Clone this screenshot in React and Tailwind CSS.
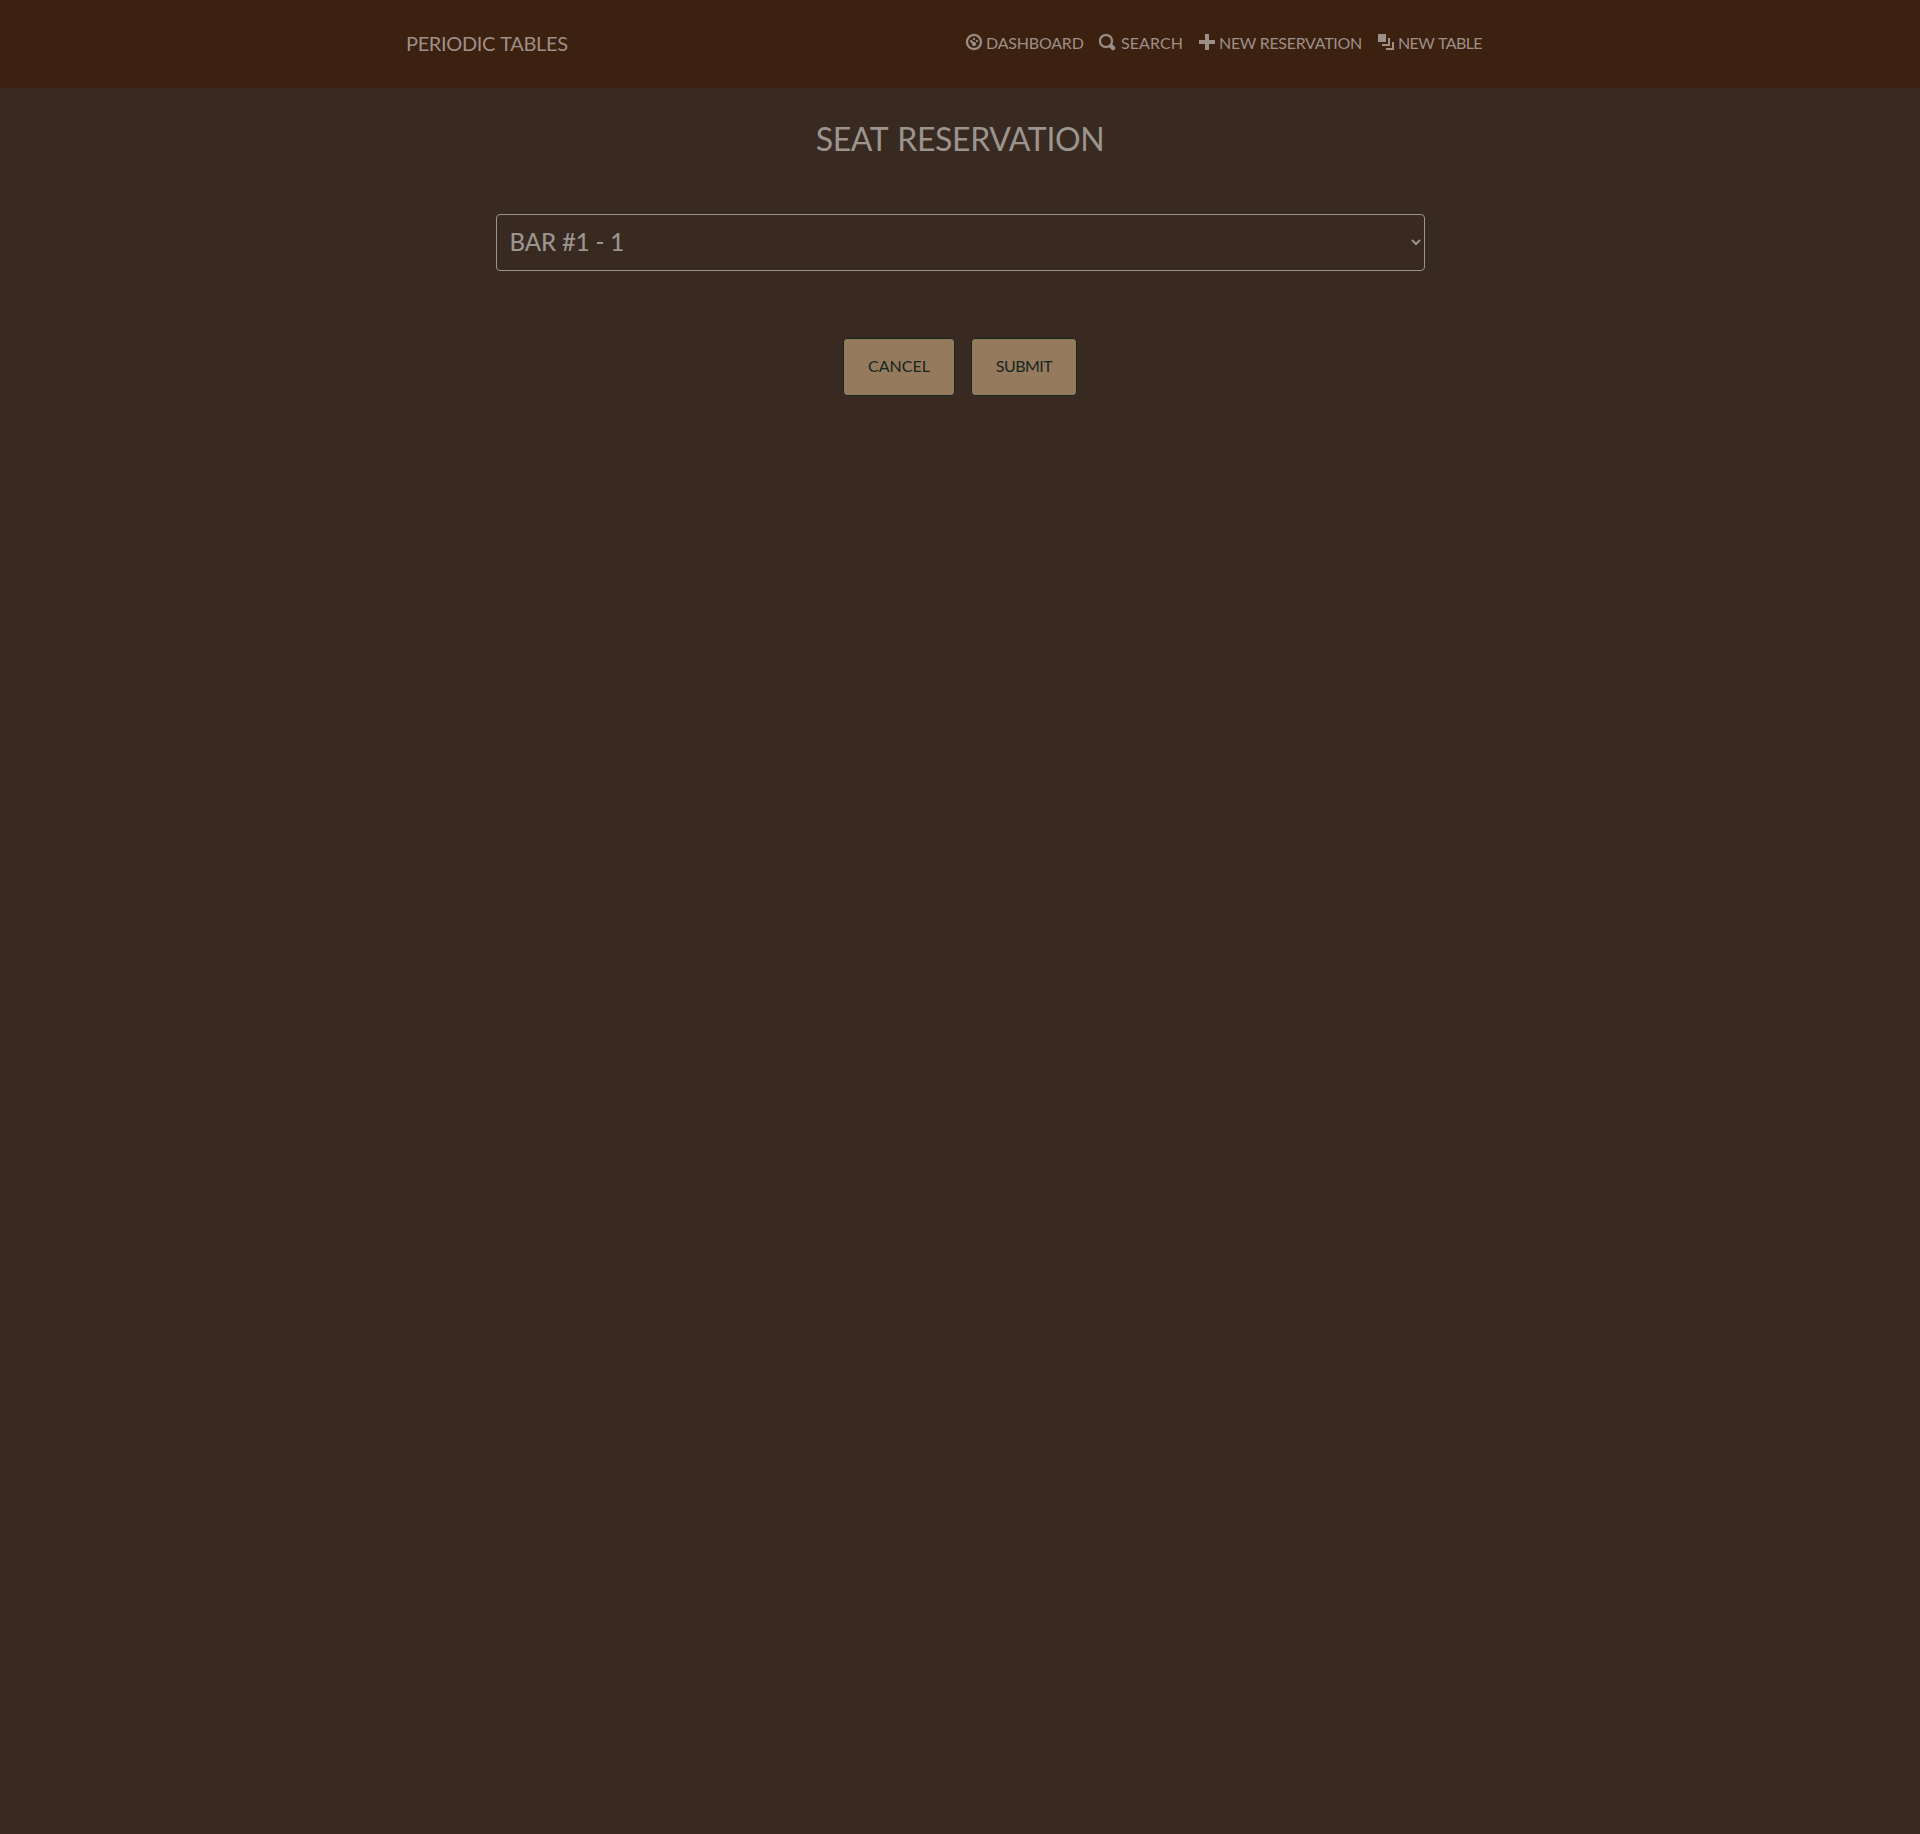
const icons = {
  dial: "M4 0c-2.2 0-4 1.8-4 4s1.8 4 4 4 4-1.8 4-4-1.8-4-4-4zm0 1c1.66 0 3 1.34 3 3s-1.34 3-3 3-3-1.34-3-3 1.34-3 3-3zm0 1c-.28 0-.5.22-.5.5s.22.5.5.5.5-.22.5-.5-.22-.5-.5-.5zm-1.66 1a.5.5 0 0 0-.19.84l.91.91c-.02.08-.06.16-.06.25 0 .55.45 1 1 1s1-.45 1-1-.45-1-1-1c-.09 0-.17.04-.25.06l-.91-.91a.5.5 0 0 0-.44-.16.5.5 0 0 0-.06 0zm3.16 0c-.28 0-.5.22-.5.5s.22.5.5.5.5-.22.5-.5-.22-.5-.5-.5z",
  search: "M3.5 0c-1.93 0-3.5 1.57-3.5 3.5s1.57 3.5 3.5 3.5c.59 0 1.17-.14 1.66-.41a1 1 0 0 0 .13.13l1 1a1.02 1.02 0 1 0 1.44-1.44l-1-1a1 1 0 0 0-.16-.13c.27-.49.44-1.06.44-1.66 0-1.93-1.55-3.5-3.5-3.5zm0 1c1.39 0 2.5 1.11 2.5 2.5 0 .66-.24 1.27-.66 1.72-.01.01-.02.02-.03.03a1 1 0 0 0-.13.13c-.44.4-1.04.63-1.69.63-1.39 0-2.5-1.11-2.5-2.5s1.11-2.5 2.5-2.5z",
  plus: "M3 0v3h-3v2h3v3h2v-3h3v-2h-3v-3h-2z",
  layers: "M0 0v4h4v-4h-4zm5 2v3h-3v1h4v-4h-1zm2 2v3h-3v1h4v-4h-1z",
};

const links = [
  { label: "DASHBOARD", icon: "dial", stroke: 0.15, box: "w-[133px] gap-1", text: "tracking-[-0.2px]" },
  { label: "SEARCH", icon: "search", stroke: 0.15, box: "w-[100px] gap-1.5", text: "tracking-[0.1px]" },
  { label: "NEW RESERVATION", icon: "plus", stroke: 0, box: "w-[179px] gap-1", text: "tracking-[-0.3px]" },
  { label: "NEW TABLE", icon: "layers", stroke: 0, box: "w-[108px] gap-1", text: "tracking-[-0.6px] [word-spacing:1px]" },
];

function NavLink({ label, icon, stroke, box, text }) {
  return (
    <a href="#" className={`flex shrink-0 whitespace-nowrap ${box}`}>
      <svg viewBox="0 0 8 8" className="mt-[3px] size-4 shrink-0 overflow-visible" fill="currentColor" stroke="currentColor" strokeWidth={stroke}>
        <path d={icons[icon]} />
      </svg>
      <span className={text}>{label}</span>
    </a>
  );
}

export default function App() {
  return (
    <div className="min-h-screen bg-[#382a20] font-['Lato',sans-serif] text-base text-[#9b948f]">
      <header className="flex h-[88px] justify-between bg-[#3c2010] pr-[434px] pl-[406px] text-[#9d8f87]">
        <a href="#" className="mt-7 text-xl leading-[30px] tracking-[-0.35px] [word-spacing:1px]">PERIODIC TABLES</a>
        <nav className="mt-[31px] flex leading-6">
          {links.map((link) => <NavLink key={link.label} {...link} />)}
        </nav>
      </header>
      <main className="flex flex-col items-center">
        <h1 className="mt-[27px] text-[32px] leading-12 tracking-[-0.36px] [word-spacing:2px]">SEAT RESERVATION</h1>
        <select className="mt-[51px] h-[57px] w-[929px] rounded border border-[#9b948f] bg-transparent pr-px pb-0.5 pl-[9px] text-2xl font-medium tracking-[-0.1px]">
          <option>BAR #1 - 1</option>
        </select>
        <div className="mt-[67px] flex gap-4">
          <button className="h-[58px] w-[112px] rounded border border-[#14261f] bg-[#967a5e] pb-0.5 text-[#14261f]">CANCEL</button>
          <button className="h-[58px] w-[106px] rounded border border-[#14261f] bg-[#967a5e] pb-0.5 tracking-[-0.5px] text-[#14261f]">SUBMIT</button>
        </div>
      </main>
    </div>
  );
}
